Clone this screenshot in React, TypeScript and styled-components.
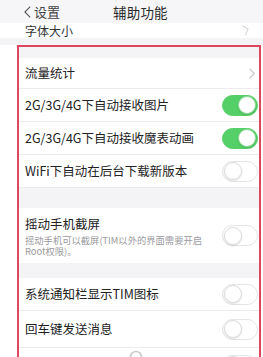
import styled, { createGlobalStyle } from "styled-components";

const GlobalStyle = createGlobalStyle`
  html, body {
    margin: 0;
    padding: 0;
    background: #ffffff;
  }
  body {
    font-family: "Noto Sans CJK SC", "Noto Sans", sans-serif;
    color: #222222;
    overflow: hidden;
  }
`;

type Item = { label: string; kind: "link" | "toggle"; on?: boolean; height: number };

const groupA: Item[] = [
  { label: "流量统计", kind: "link", height: 31 },
  { label: "2G/3G/4G下自动接收图片", kind: "toggle", on: true, height: 33 },
  { label: "2G/3G/4G下自动接收魔表动画", kind: "toggle", on: true, height: 33 },
  { label: "WiFi下自动在后台下载新版本", kind: "toggle", height: 33 },
];

const groupC: Item[] = [
  { label: "系统通知栏显示TIM图标", kind: "toggle", height: 33 },
  { label: "回车键发送消息", kind: "toggle", height: 37 },
];

const Chevron = ({ color = "#c4c4c8" }: { color?: string }) => (
  <svg width="6" height="11" viewBox="0 0 6 11">
    <polyline points="0.6,0.6 5.2,5.5 0.6,10.4" fill="none" stroke={color} strokeWidth="1.1" />
  </svg>
);

const BackArrow = () => (
  <svg width="7" height="12" viewBox="0 0 7 12">
    <polyline points="6.2,0.6 0.9,6 6.2,11.4" fill="none" stroke="#555" strokeWidth="1.1" />
  </svg>
);

const Switch = ({ on }: { on?: boolean }) => (
  <Track $on={!!on}>
    <Knob $on={!!on} />
  </Track>
);

export default function App() {
  return (
    <Page>
      <GlobalStyle />
      <NavBar>
        <BackLink>
          <BackArrow />
          <span>设置</span>
        </BackLink>
        <NavTitle>辅助功能</NavTitle>
      </NavBar>
      <FontRow>
        <FontLabel>字体大小</FontLabel>
        <FontChevron>
          <Chevron color="#d6d6da" />
        </FontChevron>
      </FontRow>
      <Band $h={7} />
      <Frame>
        <Band $h={11} />
        {groupA.map((it) => (
          <Row key={it.label} $h={it.height}>
            <Label>{it.label}</Label>
            {it.kind === "link" ? (
              <LinkArrow>
                <Chevron />
              </LinkArrow>
            ) : (
              <Switch on={it.on} />
            )}
          </Row>
        ))}
        <Band $h={20} />
        <Row $h={55} $last>
          <TextStack>
            <Label>摇动手机截屏</Label>
            <Hint>摇动手机可以截屏(TIM以外的界面需要开启Root权限)。</Hint>
          </TextStack>
          <Switch />
        </Row>
        <Band $h={15} />
        {groupC.map((it) => (
          <Row key={it.label} $h={it.height}>
            <Label>{it.label}</Label>
            <Switch on={it.on} />
          </Row>
        ))}
        <Row $h={34} $last>
          <Label />
          <PartialIcon>
            <svg width="14" height="14" viewBox="0 0 14 14">
              <circle cx="7" cy="7" r="5.5" fill="none" stroke="#c9c9cd" strokeWidth="1.6" />
            </svg>
          </PartialIcon>
          <Switch />
        </Row>
      </Frame>
    </Page>
  );
}

const Page = styled.div`
  width: 263px;
  height: 357px;
  overflow: hidden;
  background: #ffffff;
`;

const NavBar = styled.div`
  height: 23px;
  background: #f6f6f8;
  display: flex;
  align-items: center;
  gap: 53px;
  padding-left: 24px;
  box-sizing: border-box;
`;

const BackLink = styled.div`
  display: flex;
  align-items: center;
  gap: 3px;
  font-size: 13px;
  color: #444444;
  line-height: 16px;
`;

const NavTitle = styled.div`
  font-size: 13.5px;
  color: #2a2a2a;
  line-height: 16px;
  letter-spacing: 0.2px;
`;

const FontRow = styled.div`
  height: 15px;
  background: #ffffff;
  overflow: hidden;
  display: flex;
  align-items: flex-end;
  justify-content: space-between;
  padding: 0 14px 2px 25px;
  box-sizing: border-box;
`;

const FontLabel = styled.div`
  font-size: 12px;
  line-height: 11px;
  color: #333333;
`;

const FontChevron = styled.div`
  display: flex;
  transform: rotate(-20deg);
  margin-bottom: 1px;
`;

const Band = styled.div<{ $h: number }>`
  height: ${(p) => p.$h}px;
  background: #f4f4f7;
`;

const Frame = styled.div`
  margin: 0 2px 0 17px;
  border: 2px solid #d9485f;
  border-bottom: none;
  background: #ffffff;
`;

const Row = styled.div<{ $h: number; $last?: boolean }>`
  height: ${(p) => p.$h}px;
  display: flex;
  align-items: center;
  justify-content: space-between;
  padding: 0 1px 0 6px;
  box-sizing: border-box;
  background: #ffffff;
  border-bottom: ${(p) => (p.$last ? "none" : "1px solid #ebebee")};
  position: relative;
`;

const Label = styled.div`
  font-size: 12.5px;
  color: #222222;
  line-height: 16px;
  white-space: nowrap;
`;

const TextStack = styled.div`
  display: flex;
  flex-direction: column;
  gap: 3px;
  padding-top: 2px;
`;

const Hint = styled.div`
  font-size: 9.3px;
  line-height: 11px;
  color: #9a9a9e;
  width: 190px;
`;

const LinkArrow = styled.div`
  display: flex;
  margin-right: 3px;
`;

const PartialIcon = styled.div`
  position: absolute;
  left: 110px;
  top: 2px;
  display: flex;
`;

const Track = styled.div<{ $on: boolean }>`
  width: 36px;
  height: 21px;
  border-radius: 11px;
  box-sizing: border-box;
  flex-shrink: 0;
  display: flex;
  align-items: center;
  justify-content: ${(p) => (p.$on ? "flex-end" : "flex-start")};
  padding: 0 1px;
  background: ${(p) => (p.$on ? "#55cf67" : "#ffffff")};
  border: 1px solid ${(p) => (p.$on ? "#55cf67" : "#e4e4e7")};
`;

const Knob = styled.div<{ $on: boolean }>`
  width: 18px;
  height: 18px;
  border-radius: 50%;
  background: #ffffff;
  box-sizing: border-box;
  border: 1px solid ${(p) => (p.$on ? "#8fd99a" : "#dcdce0")};
  box-shadow: 0 1px 2px rgba(0, 0, 0, 0.12);
`;
